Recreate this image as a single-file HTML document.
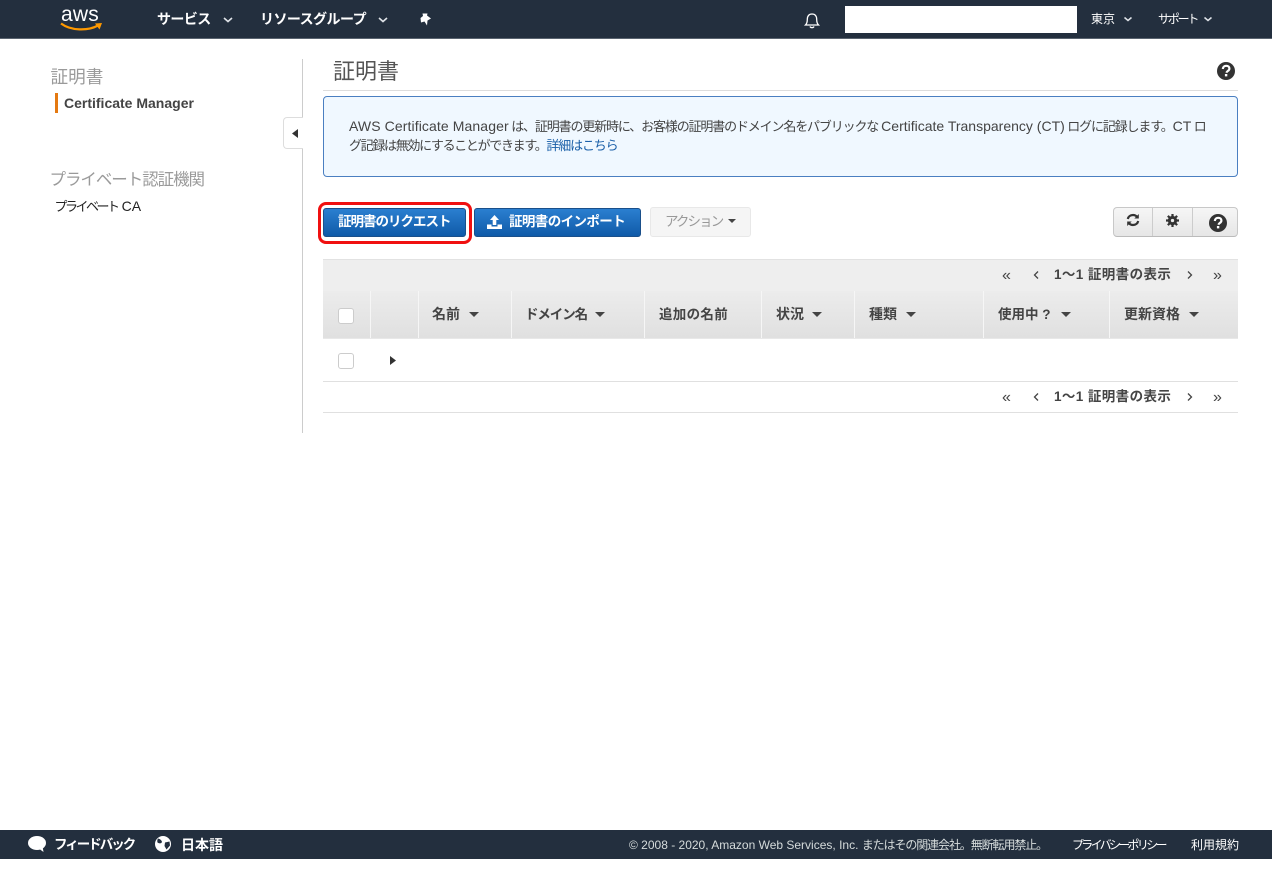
<!DOCTYPE html>
<html lang="ja"><head><meta charset="utf-8"><title>証明書</title>
<style>
html,body{margin:0;padding:0;background:#fff;width:1272px;height:876px;overflow:hidden}
body{position:relative;font-family:"Liberation Sans","Noto Sans CJK JP",sans-serif;color:#444}
.a{position:absolute;white-space:nowrap}
.t{position:absolute;white-space:nowrap;line-height:20px;height:20px}
.b{font-weight:bold}
.w{color:#fff}
.car{position:absolute;width:0;height:0;border-left:5px solid transparent;border-right:5px solid transparent;border-top:5px solid #444}
.th{position:absolute;top:291px;height:47px;background:linear-gradient(#ececec,#e0e0e0);border-left:1px solid #f6f6f6;box-sizing:border-box}
.cb{position:absolute;width:14px;height:14px;border:1px solid #ccc;border-radius:3px;background:#fff}
.n{font-size:13px;letter-spacing:-1.15px;color:#444}
.n i{font-style:normal;font-size:14px;letter-spacing:0}
svg{position:absolute;overflow:visible}
</style></head><body>

<!-- top bar -->
<div class="a" style="left:0;top:0;width:1272px;height:38px;background:#232f3e;border-bottom:1px solid #5a6470"></div>
<div class="t w" style="left:61px;top:5px;font-size:21px;letter-spacing:.2px">aws</div>
<svg style="left:60px;top:22px" width="43" height="12" viewBox="0 0 43 12"><path d="M1 1.500C11 9 28 9 38 3.500" fill="none" stroke="#f90" stroke-width="2.200"/><path d="M35 1.500L42 1 39.500 7.500" fill="#f90"/></svg>
<div class="t b w" style="left:157px;top:9px;font-size:14px;letter-spacing:-.6px">サービス</div>
<svg style="left:223px;top:17px" width="10" height="6"><path d="M1 1L5 4.500 9 1" fill="none" stroke="#dfe3e8" stroke-width="1.600"/></svg>
<div class="t b w" style="left:260px;top:9px;font-size:14px;letter-spacing:-.55px">リソースグループ</div>
<svg style="left:378px;top:17px" width="10" height="6"><path d="M1 1L5 4.500 9 1" fill="none" stroke="#dfe3e8" stroke-width="1.600"/></svg>
<svg style="left:419px;top:13px" width="13" height="13" viewBox="0 0 13 13"><path d="M3.500 0.500L8.500 0.500 8 2.500 12 5.500 8.500 7.500 8 12.500 5.500 8.500 2 9.500 1.500 5 4 3z" fill="#fff"/></svg>
<svg style="left:804px;top:12px" width="16" height="17" viewBox="0 0 16 17"><path d="M1.500 13C3 11.500 3.300 10 3.300 7.500 3.300 4 5 2 8 2s4.700 2 4.700 5.500c0 2.500.3 4 1.800 5.500z" fill="none" stroke="#fff" stroke-width="1.300"/><path d="M6 14.500c.5 1.500 3.500 1.500 4 0" fill="none" stroke="#fff" stroke-width="1.300"/></svg>
<div class="a" style="left:845px;top:6px;width:232px;height:27px;background:#fff"></div>
<div class="t w" style="left:1091px;top:9px;font-size:12px">東京</div>
<svg style="left:1124px;top:17px" width="8" height="5"><path d="M.5 .5L4 3.500 7.500 .5" fill="none" stroke="#dfe3e8" stroke-width="1.500"/></svg>
<div class="t w" style="left:1158px;top:9px;font-size:12px;letter-spacing:-2.200px">サポート</div>
<svg style="left:1204px;top:17px" width="8" height="5"><path d="M.5 .5L4 3.500 7.500 .5" fill="none" stroke="#dfe3e8" stroke-width="1.500"/></svg>

<!-- sidebar -->
<div class="t" style="left:50.500px;top:67px;font-size:17.600px;color:#9a9a9a">証明書</div>
<div class="a" style="left:55px;top:93px;width:3px;height:20px;background:#e47911"></div>
<div class="t b" style="left:64px;top:93px;font-size:14px;color:#444">Certificate Manager</div>
<div class="t" style="left:49.500px;top:170px;font-size:16.500px;color:#9a9a9a;letter-spacing:-1.050px">プライベート認証機関</div>
<div class="t" style="left:54.500px;top:195.500px;font-size:13px;color:#222;letter-spacing:-2.500px">プライベート <span style="font-size:14px;letter-spacing:0;margin-left:3px">CA</span></div>

<!-- divider + collapse tab -->
<div class="a" style="left:302px;top:59px;width:1px;height:374px;background:#ccc"></div>
<div class="a" style="left:283px;top:117px;width:20px;height:32px;box-sizing:border-box;background:#fff;border:1px solid #ddd;border-right:0;border-radius:4px 0 0 4px"></div>
<svg style="left:292px;top:129px" width="6" height="9"><path d="M6 0V9L0 4.500z" fill="#333"/></svg>

<!-- title -->
<div class="t" style="left:333px;top:61px;font-size:22px;line-height:22px;color:#555">証明書</div>
<div class="a" style="left:323px;top:90px;width:915px;height:1px;background:#ddd"></div>
<svg style="left:1217px;top:62px" width="18" height="18" viewBox="0 0 18 18"><circle cx="9" cy="9" r="9" fill="#333"/><path d="M5.800 7C6 4.800 7.500 3.800 9.200 3.800c2 0 3.200 1.200 3.200 2.800 0 2.300-2.700 2.300-2.700 4.100" fill="none" stroke="#fff" stroke-width="2.200"/><rect x="7.900" y="12" width="2.400" height="2.400" fill="#fff"/></svg>

<!-- notice -->
<div class="a" style="left:323px;top:96px;width:915px;height:81px;box-sizing:border-box;background:#f0f8ff;border:1px solid #4a7fc1;border-radius:4px"></div>
<div class="t n" style="left:349px;top:116px"><i style="letter-spacing:.1px">AWS Certificate Manager</i> は、証明書の更新時に、お客様の証明書のドメイン名をパブリックな<i style="margin-left:3px">Certificate Transparency (CT)</i> ログに記録します。<i>CT</i> ロ</div>
<div class="t n" style="left:349px;top:136px;letter-spacing:-1.320px">グ記録は無効にすることができます。<span style="color:#1a5fa8;letter-spacing:-1.150px">詳細はこちら</span></div>

<!-- buttons -->
<div class="a" style="left:318px;top:202px;width:154px;height:42px;box-sizing:border-box;border:3px solid #f01010;border-radius:8px"></div>
<div class="a" style="left:323px;top:208px;width:143px;height:29px;box-sizing:border-box;background:linear-gradient(#2b7fd0,#0f5aa8);border:1px solid #1a4f8a;border-radius:3px"></div>
<div class="t b w" style="left:338px;top:212px;font-size:13.500px;letter-spacing:-1px">証明書のリクエスト</div>
<div class="a" style="left:474px;top:208px;width:167px;height:29px;box-sizing:border-box;background:linear-gradient(#2b7fd0,#0f5aa8);border:1px solid #1a4f8a;border-radius:3px"></div>
<svg style="left:487px;top:215px" width="15" height="14" viewBox="0 0 15 14"><path d="M7.500 0L12 5H9.300V10H5.700V5H3z" fill="#fff"/><path d="M0 9.500H4.500V11.500H10.500V9.500H15V14H0z" fill="#fff"/></svg>
<div class="t b w" style="left:509px;top:212px;font-size:13.500px;letter-spacing:-.6px">証明書のインポート</div>
<div class="a" style="left:650px;top:207px;width:101px;height:30px;box-sizing:border-box;background:#f5f5f5;border:1px solid #e8e8e8;border-radius:3px"></div>
<div class="t" style="left:665px;top:212px;font-size:13.500px;color:#999;letter-spacing:-1.900px">アクション</div>
<div class="car" style="left:728px;top:219px;border-left-width:4px;border-right-width:4px;border-top-width:4px"></div>

<div class="a" style="left:1113px;top:207px;width:125px;height:30px;box-sizing:border-box;background:linear-gradient(#f6f6f6,#e6e6e6);border:1px solid #c8c8c8;border-bottom-color:#bbb;border-radius:4px"></div>
<div class="a" style="left:1152px;top:208px;width:1px;height:28px;background:#ccc"></div>
<div class="a" style="left:1192px;top:208px;width:1px;height:28px;background:#ccc"></div>
<svg style="left:1126px;top:213px" width="14" height="14" viewBox="0 0 14 14"><path d="M1.800 6C2.300 3.500 4.300 2 7 2c1.800 0 3.200.8 4.200 2" fill="none" stroke="#333" stroke-width="2.200"/><path d="M12.800 1V5.500H8.300z" fill="#333"/><path d="M12.200 8C11.700 10.500 9.700 12 7 12c-1.800 0-3.200-.8-4.200-2" fill="none" stroke="#333" stroke-width="2.200"/><path d="M1.200 13V8.500H5.700z" fill="#333"/></svg>
<svg style="left:1166px;top:214px" width="13" height="13" viewBox="0 0 14 14"><circle cx="7" cy="7" r="3.500" fill="none" stroke="#333" stroke-width="3"/><path d="M7 0V14M0 7H14M2 2L12 12M12 2L2 12" stroke="#333" stroke-width="2.400"/><circle cx="7" cy="7" r="1.800" fill="#ececec"/></svg>
<svg style="left:1209px;top:214px" width="18" height="18" viewBox="0 0 18 18"><circle cx="9" cy="9" r="9" fill="#333"/><path d="M5.800 7C6 4.800 7.500 3.800 9.200 3.800c2 0 3.200 1.200 3.200 2.800 0 2.300-2.700 2.300-2.700 4.100" fill="none" stroke="#fff" stroke-width="2.200"/><rect x="7.900" y="12" width="2.400" height="2.400" fill="#fff"/></svg>

<!-- table pager band -->
<div class="a" style="left:323px;top:259px;width:915px;height:32px;box-sizing:border-box;background:#eee;border-top:1px solid #e2e2e2"></div>
<div class="t" style="left:1002px;top:266px;font-size:16px;color:#444">«</div>
<svg style="left:1033px;top:271px" width="6" height="8"><path d="M5 .5L1.500 4 5 7.500" fill="none" stroke="#444" stroke-width="1.300"/></svg>
<div class="t b" style="left:1054px;top:265px;font-size:13.500px;letter-spacing:.4px">1～1 証明書の表示</div>
<svg style="left:1187px;top:271px" width="6" height="8"><path d="M1 .5L4.500 4 1 7.500" fill="none" stroke="#444" stroke-width="1.300"/></svg>
<div class="t" style="left:1213px;top:266px;font-size:16px;color:#444">»</div>

<!-- header -->
<div class="th" style="left:323px;width:47px;border-left:0"></div>
<div class="th" style="left:370px;width:48px"></div>
<div class="th" style="left:418px;width:93px"></div>
<div class="th" style="left:511px;width:133px"></div>
<div class="th" style="left:644px;width:117px"></div>
<div class="th" style="left:761px;width:93px"></div>
<div class="th" style="left:854px;width:129px"></div>
<div class="th" style="left:983px;width:126px"></div>
<div class="th" style="left:1109px;width:129px"></div>
<div class="a" style="left:323px;top:338px;width:915px;height:1px;background:#e8e8e8"></div>
<div class="cb" style="left:338px;top:308px"></div>
<div class="t b" style="left:432px;top:304px;font-size:14px">名前</div>
<div class="car" style="left:469px;top:312px"></div>
<div class="t b" style="left:525px;top:305px;font-size:13.500px;letter-spacing:-1.100px">ドメイン名</div>
<div class="car" style="left:595px;top:312px"></div>
<div class="t b" style="left:659px;top:305px;font-size:13.500px;letter-spacing:.3px">追加の名前</div>
<div class="t b" style="left:776px;top:304px;font-size:14px">状況</div>
<div class="car" style="left:812px;top:312px"></div>
<div class="t b" style="left:869px;top:304px;font-size:14px">種類</div>
<div class="car" style="left:906px;top:312px"></div>
<div class="t b" style="left:998px;top:305px;font-size:13.500px">使用中 ?</div>
<div class="car" style="left:1061px;top:312px"></div>
<div class="t b" style="left:1124px;top:304px;font-size:14px">更新資格</div>
<div class="car" style="left:1189px;top:312px"></div>

<!-- row -->
<div class="cb" style="left:338px;top:353px"></div>
<svg style="left:390px;top:356px" width="6" height="9"><path d="M0 0V9L6 4.500z" fill="#333"/></svg>
<div class="a" style="left:323px;top:381px;width:915px;height:1px;background:#e0e0e0"></div>
<div class="a" style="left:323px;top:412px;width:915px;height:1px;background:#e0e0e0"></div>
<div class="t" style="left:1002px;top:388px;font-size:16px;color:#444">«</div>
<svg style="left:1033px;top:393px" width="6" height="8"><path d="M5 .5L1.500 4 5 7.500" fill="none" stroke="#444" stroke-width="1.300"/></svg>
<div class="t b" style="left:1054px;top:387px;font-size:13.500px;letter-spacing:.4px">1～1 証明書の表示</div>
<svg style="left:1187px;top:393px" width="6" height="8"><path d="M1 .5L4.500 4 1 7.500" fill="none" stroke="#444" stroke-width="1.300"/></svg>
<div class="t" style="left:1213px;top:388px;font-size:16px;color:#444">»</div>

<!-- footer -->
<div class="a" style="left:0;top:830px;width:1272px;height:29px;background:#232f3e"></div>
<svg style="left:28px;top:836px" width="18" height="16" viewBox="0 0 18 16"><ellipse cx="9" cy="7" rx="9" ry="7" fill="#fff"/><path d="M10 12L15.500 16 14.500 10z" fill="#fff"/></svg>
<div class="t b w" style="left:54px;top:835px;font-size:13.500px;letter-spacing:-2px">フィードバック</div>
<svg style="left:155px;top:836px" width="16" height="16" viewBox="0 0 16 16"><circle cx="8" cy="8" r="8" fill="#fff"/><path d="M3 2.500C5 3 6.500 4 7 6 6 8 4 7.500 2.500 6.500 2 5 2.300 3.500 3 2.500zM10 6.500L14.500 5.500 15 9.500 11.500 13.500 9.500 10z" fill="#232f3e"/></svg>
<div class="t b w" style="left:181px;top:835px;font-size:14px">日本語</div>
<div class="t" style="left:629px;top:835px;font-size:12px;color:#d5dbdb">© 2008 - 2020, Amazon Web Services, Inc. <span style="letter-spacing:-1.100px">またはその関連会社。無断転用禁止。</span></div>
<div class="t w" style="left:1072px;top:835px;font-size:12px;letter-spacing:-2.700px">プライバシーポリシー</div>
<div class="t w" style="left:1191px;top:835px;font-size:12px">利用規約</div>
</body></html>
